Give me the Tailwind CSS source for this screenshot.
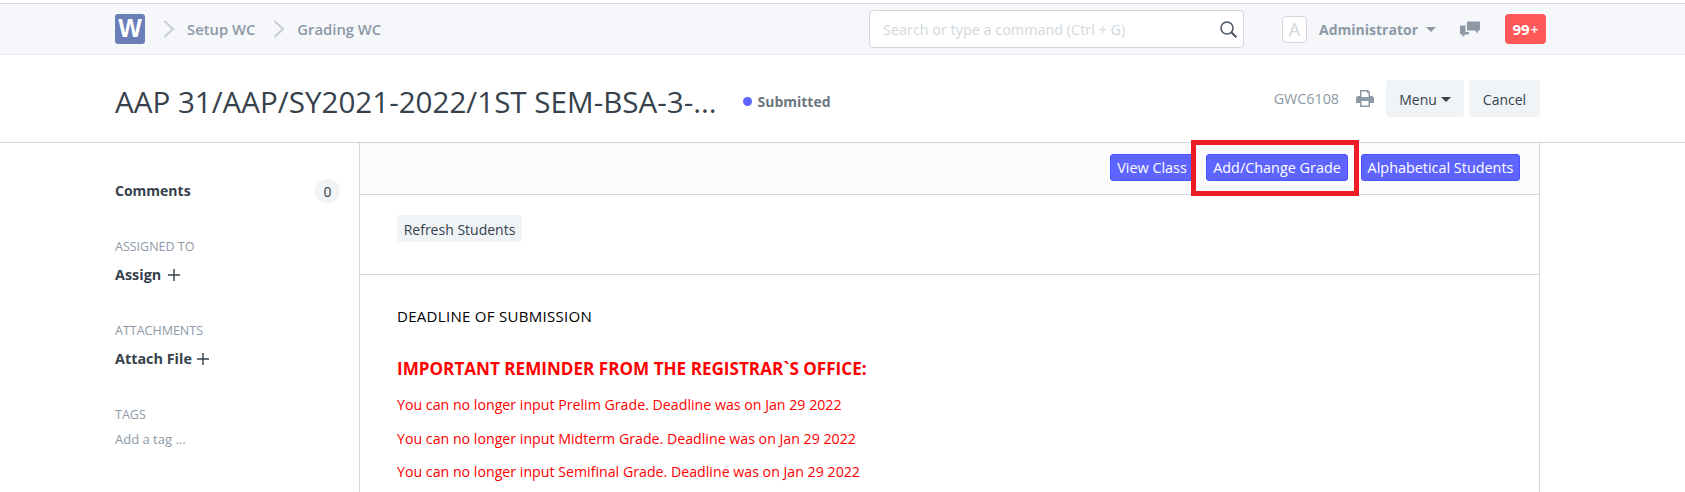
<!DOCTYPE html>
<html lang="en">
<head>
    <meta charset="UTF-8">
    <title>Grading WC</title>
    <script src="https://cdn.jsdelivr.net/npm/@tailwindcss/browser@4"></script>
</head>
<body class="relative h-[492px] overflow-hidden bg-white font-['Open_Sans',sans-serif] text-[#36414c]">

    <!-- navbar -->
    <div class="mt-[3px] h-[52px] border-t border-b border-t-[#d1d8dd] border-b-[#ebeff2] bg-[#f5f7fa] pl-[115px] pr-[139px] flex items-center">
        <div class="w-[30px] h-[30px] rounded-[3px] bg-[#6a7fb8] flex items-center justify-center text-white font-bold text-[25px] font-['Liberation_Sans',sans-serif]">W</div>
        <svg class="ml-[18px] w-[12px] h-[20px] text-[#c8ced3]" viewBox="0 0 12 20" fill="none" stroke="currentColor" stroke-width="2"><path d="M1.5 2l8.5 8-8.5 8"/></svg>
        <span class="ml-[12px] text-[14.8px] font-semibold text-[#8d99a6]">Setup WC</span>
        <svg class="ml-[18px] w-[12px] h-[20px] text-[#c8ced3]" viewBox="0 0 12 20" fill="none" stroke="currentColor" stroke-width="2"><path d="M1.5 2l8.5 8-8.5 8"/></svg>
        <span class="ml-[12px] text-[14.8px] font-semibold text-[#8d99a6]">Grading WC</span>

        <div class="ml-auto w-[375px] h-[38px] bg-white border border-[#d1d8dd] rounded-[4px] flex items-center pl-[13px] pr-[6px]">
            <span class="pt-[1px] text-[14.4px] text-[#d1d8dd]">Search or type a command (Ctrl + G)</span>
            <svg class="ml-auto w-[17px] h-[17px] text-[#4a5560]" viewBox="0 0 17 17" fill="none" stroke="currentColor" stroke-width="1.5"><circle cx="7" cy="7" r="6"/><path d="M11.300 11.300l5 5" stroke-width="2"/></svg>
        </div>
        <div class="ml-[38px] w-[25px] h-[27px] border border-[#d1d8dd] rounded-[4px] bg-white flex items-center justify-center text-[18px] text-[#d1d8dd]">A</div>
        <span class="ml-[12px] text-[14px] font-bold text-[#8d99a6]">Administrator</span>
        <span class="ml-[8px] w-0 h-0 border-x-[5px] border-x-transparent border-t-[5px] border-t-[#8d99a6]"></span>
        <svg class="ml-[24px] w-[20px] h-[17px] text-[#8d99a6]" viewBox="0 0 20 17" fill="currentColor"><path d="M8 .5h11a1 1 0 0 1 1 1v7a1 1 0 0 1-1 1h-1v3l-3-3H7v-8a1 1 0 0 1 1-1z"/><path d="M1 4.500h4.500v6.500H9v1.500a1 1 0 0 1-1 1H5l-2.500 3v-3H1a1 1 0 0 1-1-1v-7a1 1 0 0 1 1-1z"/></svg>
        <div class="ml-[25px] w-[41px] h-[30px] rounded-[4px] bg-[#ff5858] flex items-center justify-center text-[15px] font-bold text-white">99<span class="font-semibold text-[14px] ml-[1px]">+</span></div>
    </div>

    <!-- page head -->
    <div class="h-[88px] border-b border-[#d1d8dd] pl-[115px] pr-[145px] flex items-center">
        <h1 class="mt-[6px] text-[29.6px] leading-none text-[#36414c]">AAP 31/AAP/SY2021-2022/1ST SEM-BSA-3-...</h1>
        <span class="mt-[6px] ml-[26px] w-[9px] h-[9px] rounded-full bg-[#5e64ff]"></span>
        <span class="mt-[6px] ml-[6px] text-[14px] font-bold text-[#6c7680]">Submitted</span>
        <span class="ml-auto pt-[1px] text-[14.3px] text-[#8d99a6]">GWC6108</span>
        <svg class="ml-[17px] w-[18px] h-[17px] text-[#8d99a6]" viewBox="0 0 18 17" fill="currentColor"><path fill-rule="evenodd" d="M4 0h8l2 2v4h1.500A2.500 2.500 0 0 1 18 8.500V13h-4v4H4v-4H0V8.500A2.500 2.500 0 0 1 2.500 6H4V0zm1.500 1.500V7h7V3H11V1.500H5.500zM5.500 11v4.500h7V11h-7z"/></svg>
        <button class="ml-[12px] w-[78px] h-[37px] pt-[1px] rounded-[4px] bg-[#f0f4f7] text-[14px] flex items-center justify-center">Menu<span class="ml-[4px] w-0 h-0 border-x-[5px] border-x-transparent border-t-[5px] border-t-[#36414c]"></span></button>
        <button class="ml-[5px] w-[71px] h-[37px] pt-[1px] rounded-[4px] bg-[#f0f4f7] text-[14px]">Cancel</button>
    </div>

    <div class="flex h-[350px]">
        <!-- sidebar -->
        <div class="w-[360px] shrink-0 pl-[115px] pr-[19px] border-r border-[#d1d8dd]">
            <div class="mt-[36px] flex items-center justify-between h-[24px]">
                <span class="pb-[2px] text-[14px] font-bold">Comments</span>
                <span class="w-[25px] h-[24px] rounded-full bg-[#f0f4f7] flex items-center justify-center text-[14px]">0</span>
            </div>
            <div class="mt-[35px] text-[12.5px] leading-[18px] text-[#8d99a6]">ASSIGNED TO</div>
            <div class="mt-[9px] flex items-center gap-[7px] text-[14.4px] leading-[20px] font-bold">Assign <svg class="w-[12px] h-[12px]" viewBox="0 0 12 12" stroke="currentColor" stroke-width="1.400"><path d="M6 0v12M0 6h12"/></svg></div>
            <div class="mt-[37px] text-[12.5px] leading-[18px] text-[#8d99a6]">ATTACHMENTS</div>
            <div class="mt-[9px] flex items-center gap-[5px] text-[14.4px] leading-[20px] font-bold">Attach File <svg class="w-[12px] h-[12px]" viewBox="0 0 12 12" stroke="currentColor" stroke-width="1.400"><path d="M6 0v12M0 6h12"/></svg></div>
            <div class="mt-[37px] text-[12.5px] leading-[18px] text-[#8d99a6]">TAGS</div>
            <div class="mt-[6px] text-[13px] leading-[18px] text-[#8d99a6]">Add a tag ...</div>
        </div>

        <!-- form -->
        <div class="w-[1180px] shrink-0 border-r border-[#d1d8dd]">
            <div class="h-[52px] border-b border-[#d1d8dd] bg-[#fafbfc] pr-[19px] pb-[2px] flex items-center justify-end gap-[12px]">
                <button class="h-[27px] w-[84px] pt-[1px] rounded-[3px] border border-[#4c52ff] bg-[#5e64ff] text-[14.4px] text-white">View Class</button>
                <button class="h-[27px] w-[142px] pt-[1px] rounded-[3px] border border-[#4c52ff] bg-[#5e64ff] text-[14.4px] text-white">Add/Change Grade</button>
                <button class="h-[27px] w-[159px] pt-[1px] ml-[1px] rounded-[3px] border border-[#4c52ff] bg-[#5e64ff] text-[14.4px] text-white">Alphabetical Students</button>
            </div>
            <div class="h-[80px] border-b border-[#d1d8dd] pl-[37px] pt-[20px]">
                <button class="h-[27px] w-[125px] pt-[2px] rounded-[3px] bg-[#f0f4f7] text-[14px]">Refresh Students</button>
            </div>
            <div class="pl-[37px] pt-[31px]">
                <p class="text-[15px] tracking-[0.3px] leading-[20px] text-black">DEADLINE OF SUBMISSION</p>
                <p class="mt-[30px] text-[17.1px] leading-[26px] font-bold text-[#ff0000]">IMPORTANT REMINDER FROM THE REGISTRAR`S OFFICE:</p>
                <p class="mt-[13px] text-[14.2px] leading-[20px] text-[#ff0000]">You can no longer input Prelim Grade. Deadline was on Jan 29 2022</p>
                <p class="mt-[14px] text-[14.2px] leading-[20px] text-[#ff0000]">You can no longer input Midterm Grade. Deadline was on Jan 29 2022</p>
                <p class="mt-[13px] text-[14.2px] leading-[20px] text-[#ff0000]">You can no longer input Semifinal Grade. Deadline was on Jan 29 2022</p>
            </div>
        </div>
    </div>

    <!-- red annotation box over the button -->
    <div class="absolute left-[1191px] top-[140px] w-[168px] h-[56px] border-[5px] border-[#ed1c24]"></div>
</body>
</html>
